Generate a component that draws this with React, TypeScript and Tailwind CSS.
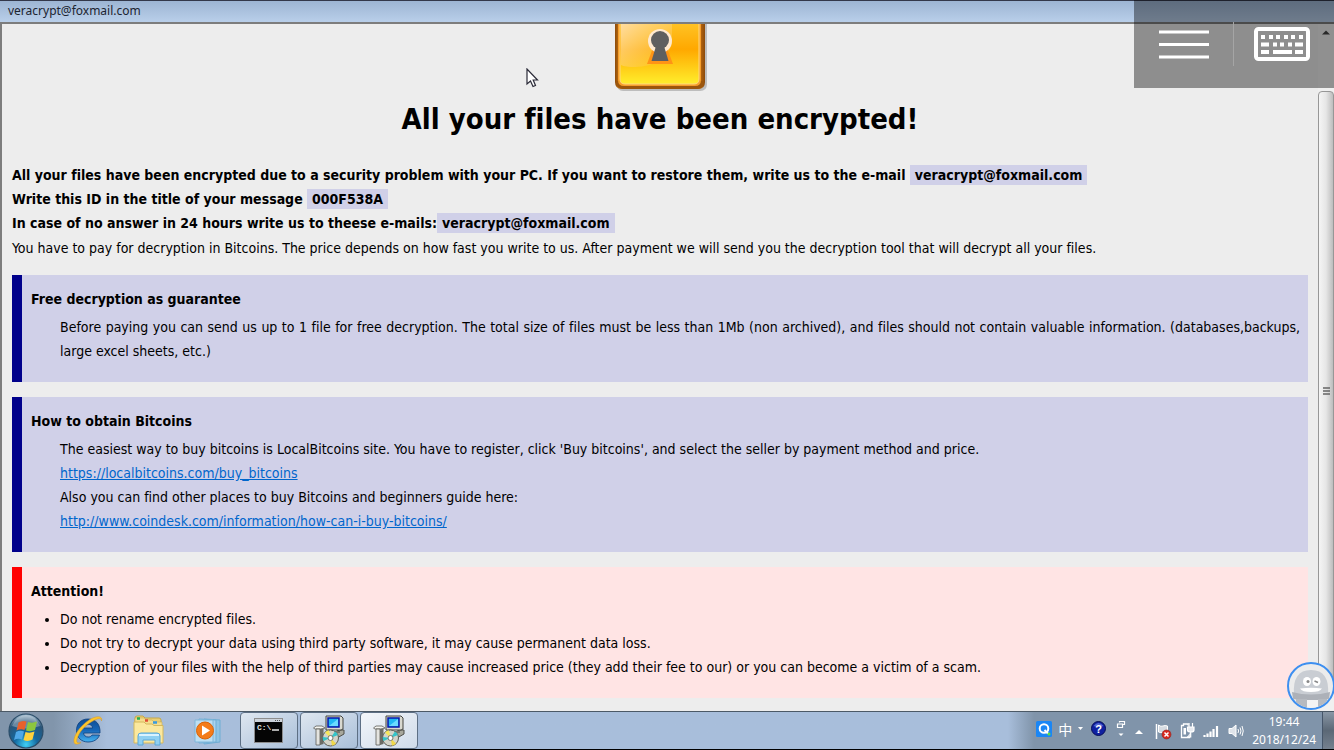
import React from "react";

const EMAIL = "veracrypt@foxmail.com";

const LockImage = () => (
    <svg width="94" height="67" viewBox="0 0 94 67" className="mx-auto block" aria-label="lock" role="img">
        <defs>
            <linearGradient id="lockBody" x1="0" y1="0" x2="0" y2="1">
                <stop offset="0" stopColor="#ffc224"/>
                <stop offset="0.42" stopColor="#ffa800"/>
                <stop offset="1" stopColor="#ffee2c"/>
            </linearGradient>
            <linearGradient id="lockShine" x1="0" y1="0" x2="1" y2="1">
                <stop offset="0" stopColor="#ffdca0"/>
                <stop offset="1" stopColor="#ffc63c" stopOpacity="0.2"/>
            </linearGradient>
            <linearGradient id="lockEdge" x1="0" y1="0" x2="1" y2="0">
                <stop offset="0" stopColor="#8c4a0a"/>
                <stop offset="0.05" stopColor="#c27312"/>
                <stop offset="0.95" stopColor="#b5660f"/>
                <stop offset="1" stopColor="#8c4a0a"/>
            </linearGradient>
        </defs>
        <path d="M4 0H94V60Q94 67 87 67H10Q4 67 4 60Z" fill="#bdbdbd"/>
        <path d="M2 0H92V58Q92 65 85 65H9Q2 65 2 58Z" fill="url(#lockEdge)"/>
        <path d="M3 57Q4 65 10 65H84Q91 65 91 57Z" fill="#9c560c"/>
        <path d="M5 0H88V56Q88 62 82 62H11Q5 62 5 56Z" fill="#f79e2a"/>
        <path d="M7 0H86V55Q86 60 81 60H12Q7 60 7 55Z" fill="url(#lockBody)"/>
        <path d="M8 0H59V20Q52 42 22 43Q12 43 8 41Z" fill="url(#lockShine)"/>
        <path d="M7 0V55Q7 60 12 60H81Q86 60 86 55V0" fill="none" stroke="#ffd880" strokeWidth="1"/>
        <path d="M40 24L34 40H60L54 24Z" fill="#ff9416"/>
        <circle cx="47" cy="17" r="12" fill="#ffe9cf"/>
        <circle cx="47" cy="16" r="9" fill="#5f5f5f"/>
        <path d="M43 22L38.500 37H55.500L51 22Z" fill="#5f5f5f"/>
    </svg>
);

const Mark = ({children}: { children: React.ReactNode }) => (
    <span className="bg-[#d0d0e8] px-[5px] py-[2px]">{children}</span>
);

const Panel = ({title, tone, children}: { title: string; tone: "info" | "danger"; children: React.ReactNode }) => (
    <section
        className={
            tone === "info"
                ? "mt-[15px] border-l-10 border-[#00008b] bg-[#d0d0e8] pt-3 pr-2 pb-[19px] pl-[9px]"
                : "mt-[15px] border-l-10 border-[#ff0000] bg-[#ffe4e4] pt-3 pr-2 pb-[19px] pl-[9px]"
        }
    >
        <h2 className="mb-1 font-bold">{title}</h2>
        <div className="pl-[29px]">{children}</div>
    </section>
);

const ScrollBar = () => (
    <div className="flex w-4 shrink-0 flex-col bg-[#f0f0f0]">
        <div className="flex h-[67px] justify-center pt-[6px]">
            <svg width="8" height="5" viewBox="0 0 8 5"><path d="M0 4.500L4 0.500L8 4.500Z" fill="#444"/></svg>
        </div>
        <div className="flex flex-1 items-center justify-center rounded-sm border border-[#979797] bg-linear-to-r from-[#f5f5f5] via-[#e6e6e6] to-[#bdbdbd]">
            <svg width="7" height="8" viewBox="0 0 7 8"><path d="M0 1H7M0 4H7M0 7H7" stroke="#666" strokeWidth="1.400"/></svg>
        </div>
        <div className="h-[21px]"/>
    </div>
);

const RemoteToolbar = () => (
    <div className="absolute top-0 right-0 z-10 flex h-[88px] items-center bg-black/40">
        <button aria-label="Menu" className="flex w-[99px] justify-center">
            <svg width="50" height="30" viewBox="0 0 50 30">
                <path d="M0 3H50M0 15.500H50M0 28H50" stroke="#fff" strokeWidth="3"/>
            </svg>
        </button>
        <div className="h-11 w-px bg-[#a5a5a5]"/>
        <button aria-label="Keyboard" className="flex w-[100px] justify-center pr-1">
            <svg width="56" height="34" viewBox="0 0 56 34">
                <rect x="2" y="2" width="52" height="30" rx="2.500" fill="none" stroke="#fff" strokeWidth="4"/>
                <path d="M7 10H11M15 10H19M22 10H26M30 10H34M37 10H41M45 10H49" stroke="#fff" strokeWidth="4"/>
                <path d="M7 17.500H15M19 17.500H23M26 17.500H30M34 17.500H38M41 17.500H49" stroke="#fff" strokeWidth="4"/>
                <path d="M7 25H15M19 25H38M41 25H49" stroke="#fff" strokeWidth="4"/>
            </svg>
        </button>
    </div>
);

const Assistant = () => (
    <button aria-label="Assistant" className="absolute right-0 bottom-[39px] z-10">
        <svg width="47" height="50" viewBox="0 0 47 50">
            <defs>
                <clipPath id="bubble"><circle cx="24" cy="25" r="22"/></clipPath>
            </defs>
            <circle cx="24" cy="25" r="23" fill="#ececec" stroke="#3d8ff0" strokeWidth="2"/>
            <g clipPath="url(#bubble)">
                <path d="M7 34Q5 9 24 9Q43 9 41 34Z" fill="#c9cdd3"/>
                <path d="M5 31Q24 36 43 31L42 38Q24 41 6 38Z" fill="#adb1b8"/>
                <path d="M9 38H20V50H9ZM31 38H40V50H31Z" fill="#b6bac0"/>
                <path d="M20 39H31V50H20Z" fill="#f4f4f4"/>
            </g>
            <ellipse cx="20" cy="20.500" rx="4" ry="4.500" fill="#fff"/>
            <ellipse cx="29.500" cy="20.500" rx="4" ry="4.500" fill="#fff"/>
            <circle cx="21" cy="20.500" r="1.500" fill="#888"/>
            <path d="M27.500 20L31 21.500" stroke="#888" strokeWidth="1.500"/>
            <path d="M13 27.500Q24 26 35 27.500Q33 31 24 31Q15 31 13 27.500Z" fill="#fff"/>
        </svg>
    </button>
);

const Cursor = () => (
    <svg className="absolute top-[68px] left-[526px]" width="13" height="20" viewBox="0 0 13 20">
        <path d="M1 1V16L4.500 13L7 18.500L9.500 17.500L7.200 12H11.500Z" fill="#fff" stroke="#2b2b38" strokeWidth="1.200"/>
    </svg>
);

const StartIcon = () => (
    <svg width="36" height="36" viewBox="0 0 36 36">
        <defs>
            <radialGradient id="orb" cx="0.5" cy="0.9" r="0.85">
                <stop offset="0" stopColor="#3fd0f5"/>
                <stop offset="0.4" stopColor="#14689f"/>
                <stop offset="0.8" stopColor="#2a5578"/>
                <stop offset="1" stopColor="#8fabc0"/>
            </radialGradient>
        </defs>
        <circle cx="18" cy="18" r="17" fill="url(#orb)" stroke="#2b4d69" strokeWidth="1.200"/>
        <path d="M4 13Q9 2 18 2Q27 2 32 13Q18 18 4 13Z" fill="#fff" opacity="0.3"/>
        <path d="M10.500 9.500Q14 7 18.500 8.500L16.500 17Q12.500 15.500 8.500 17.500Z" fill="#e8602c"/>
        <path d="M20 9Q24.500 10.500 29 8.500L27 17Q22.500 19 18 17.500Z" fill="#8cc63e"/>
        <path d="M8 19Q12 17 16 18.500L14 26.500Q10 25 6 27Z" fill="#4fa8e8"/>
        <path d="M17.500 19Q22 20.500 26.500 18.500L24.500 26.500Q20 29 15.500 27Z" fill="#ffd23c"/>
    </svg>
);

const ExplorerE = () => (
    <svg width="32" height="32" viewBox="0 0 32 32">
        <defs>
            <linearGradient id="ie" x1="0" y1="0" x2="0" y2="1">
                <stop offset="0" stopColor="#0d4c94"/>
                <stop offset="0.5" stopColor="#1767b8"/>
                <stop offset="1" stopColor="#46b4f0"/>
            </linearGradient>
        </defs>
        <path d="M16 4C8.500 4 4.500 9 4.500 15.500C4.500 22.500 9.500 27 16 27C21.500 27 26 24.500 27.500 20H20C19.300 21.300 18 22 16.200 22C13.500 22 11.800 20.500 11.600 18H28C28.500 9.500 24 4 16 4ZM11.700 13C12.200 10.500 13.800 9.300 16.200 9.300C18.700 9.300 20.300 10.700 20.600 13Z" fill="url(#ie)" stroke="#0c3f7d" strokeWidth="0.800"/>
        <path d="M29.500 6C31 1 25 0 17 5C8 11 1 21 2 27C2.500 30 6 29.500 9 27.500C5.500 28.500 4 27.500 5 24C7 17 13.500 10 20 6.500C25.500 3.200 29.500 2.500 29.500 6Z" fill="#fdc62b" stroke="#d7962a" strokeWidth="0.500"/>
    </svg>
);

const FolderIcon = () => (
    <svg width="34" height="32" viewBox="0 0 34 32">
        <path d="M3 3Q3 1 5 1H11L13 3H27Q29 3 29 5V24H3Z" fill="#e9cf76" stroke="#c6a748"/>
        <path d="M3 3H12L14 5H20L22 7H30V15H3Z" fill="#f5dd8c" stroke="#cfb056" strokeWidth="0.600"/>
        <path d="M5 3.500H8" stroke="#23b14d" strokeWidth="2.500"/>
        <path d="M13 5.500H16" stroke="#e04b32" strokeWidth="2.500"/>
        <path d="M21 7.500H25" stroke="#3a9be0" strokeWidth="2.500"/>
        <path d="M2 7H12L14 9H20L22 10.500H31V28H2Z" fill="#fbe89e" stroke="#d4b85d"/>
        <path d="M6 30V21Q6 18 9 18H25Q28 18 28 21V30H23V25H11V30Z" fill="#8fd0f2" stroke="#5aa7d8"/>
        <path d="M7 20H27" stroke="#d9f2ff" strokeWidth="2"/>
    </svg>
);

const PlayerIcon = () => (
    <svg width="30" height="28" viewBox="0 0 30 28">
        <path d="M10 2L26 3V25L10 27Z" fill="#8fc4e4" stroke="#6fadd4"/>
        <path d="M5 2L22 3V25L5 26Z" fill="#a9d4ee" stroke="#6fadd4"/>
        <path d="M1 3H19V25H1Z" fill="#bddff2" stroke="#7fb6da"/>
        <circle cx="11" cy="13.500" r="8.500" fill="#f47c1a" stroke="#d96308"/>
        <path d="M8 8.500V18.500L16 13.500Z" fill="#fff"/>
    </svg>
);

const ConsoleIcon = () => (
    <svg width="30" height="26" viewBox="0 0 30 26">
        <rect x="0.500" y="0.500" width="28" height="24" fill="#050505" stroke="#8d8d8d"/>
        <rect x="1" y="1" width="27" height="3" fill="#cdd3da"/>
        <path d="M21 2.500H27" stroke="#555" strokeDasharray="1 1"/>
        <text x="3" y="12" fontSize="8" fontWeight="bold" fill="#e4e4e4" fontFamily="Liberation Mono, monospace">C:\</text>
        <path d="M18 12H25" stroke="#e4e4e4" strokeWidth="1.500"/>
    </svg>
);

const InstallerIcon = () => (
    <svg width="32" height="32" viewBox="0 0 32 32">
        <path d="M26 15L31 15V19L24 23H18V20Z" fill="#a8a89c" stroke="#4e4e48"/>
        <path d="M13 1H28L30 3V14L28 15H13Z" fill="#d9d9d0" stroke="#44443f"/>
        <rect x="15" y="3" width="11" height="9" fill="#20b8f4" stroke="#0616a8" strokeWidth="1.500"/>
        <path d="M16 11L25 4V11Z" fill="#6adcff"/>
        <path d="M14 16H27V18H14Z" fill="#77776e"/>
        <path d="M0.500 13L3 11H9L12 13L10 14H2Z" fill="#f4f4f0" stroke="#5a5a55" strokeWidth="0.800"/>
        <path d="M3 14H7V30H3Z" fill="#e4e4e0" stroke="#5a5a55" strokeWidth="0.800"/>
        <path d="M7 14L10.500 13V29L7 30Z" fill="#6c6c66"/>
        <circle cx="17.500" cy="23" r="8" fill="#d3d3c9" stroke="#5d5d55"/>
        <path d="M17.500 23L12 17.500A8 8 0 0 1 16 15.200Z" fill="#f5e65a"/>
        <path d="M17.500 23L22 16.500A8 8 0 0 1 25 20Z" fill="#35c4c9"/>
        <path d="M17.500 23L10.500 26A8 8 0 0 1 9.700 22Z" fill="#35c4c9"/>
        <path d="M17.500 23L19 30.800A8 8 0 0 0 23 28.500Z" fill="#f0d84a"/>
        <circle cx="17.500" cy="23" r="2.500" fill="#fff" stroke="#77776e"/>
    </svg>
);

const TaskButton = ({label, active, children}: { label: string; active?: boolean; children: React.ReactNode }) => (
    <button
        aria-label={label}
        className={
            active
                ? "flex h-full w-[58px] items-center justify-center rounded-sm border border-[#5d6f84] bg-linear-to-br from-[#f3f6fa] to-[#cfdbe9]"
                : "flex h-full w-[58px] items-center justify-center rounded-sm border border-[#5d6f84] bg-linear-to-br from-[#dfe7f0] to-[#a9bfd9]"
        }
    >
        {children}
    </button>
);

const Tray = () => (
    <div className="flex h-full items-center bg-linear-to-r from-[#a8bedb] to-[#8094aa] to-8% pl-7 text-white">
        <svg width="16" height="16" viewBox="0 0 16 16" className="mr-[6px] mb-1">
            <rect width="16" height="16" rx="1.500" fill="#1a86f5"/>
            <circle cx="8" cy="7.500" r="4.300" fill="none" stroke="#fff" strokeWidth="2"/>
            <path d="M8.500 9L12 12.500" stroke="#fff" strokeWidth="2"/>
            <circle cx="13" cy="13" r="1.500" fill="#5ee03c"/>
        </svg>
        <span className="mr-1 mb-1 w-4 font-['Noto_Sans_CJK_SC',sans-serif] text-sm leading-4">中</span>
        <svg width="5" height="3" viewBox="0 0 5 3" className="mr-2 mb-1"><path d="M0 0H5L2.500 3Z" fill="#fff"/></svg>
        <svg width="15" height="15" viewBox="0 0 15 15" className="mr-[10px] mb-1">
            <circle cx="7.500" cy="7.500" r="7" fill="#1020a0" stroke="#070d58"/>
            <path d="M2.500 5Q7.500 -1 12.500 5Q7.500 7 2.500 5Z" fill="#6f83e8" opacity="0.7"/>
            <text x="7.500" y="11.500" textAnchor="middle" fontSize="11" fontWeight="bold" fill="#fff" fontFamily="Liberation Sans, sans-serif">?</text>
        </svg>
        <svg width="10" height="18" viewBox="0 0 10 18" className="mr-[9px] mb-1">
            <path d="M3.500 2.500V1.500H8.500V4.500H7M1.500 4H6.500V7.500H1.500Z" fill="none" stroke="#fff" strokeWidth="1.200"/>
            <path d="M2.500 13.500H7.500L5 16Z" fill="#fff"/>
        </svg>
        <svg width="8" height="10" viewBox="0 0 8 10" className="mr-3"><path d="M0 8L4 4L8 8Z" fill="#fff"/></svg>
        <svg width="17" height="18" viewBox="0 0 17 18" className="mr-2">
            <path d="M1.500 2V17" stroke="#fff" strokeWidth="1.500"/>
            <path d="M3.500 3Q6 5 8 4Q10 3 12.500 4V10Q10 9 8 10.500Q6 11 3.500 10Z" fill="#d5dbe2" stroke="#fff"/>
            <circle cx="11.500" cy="12.500" r="4.500" fill="#d8281f" stroke="#8b2620" strokeWidth="0.600"/>
            <path d="M9.500 10.500L13.500 14.500M13.500 10.500L9.500 14.500" stroke="#fff" strokeWidth="1.500"/>
        </svg>
        <svg width="15" height="17" viewBox="0 0 15 17" className="mr-2">
            <path d="M8 3.500V2H3.500V3.500H1.500V15.500H9.500V14" fill="none" stroke="#fff" strokeWidth="1.300"/>
            <path d="M3.500 6H6V12.500H3.500Z" fill="#fff"/>
            <path d="M9 1V5M12.500 1V5M7.500 5H14V8Q14 10 11 10Q7.500 10 7.500 8ZM10.700 10V15H7" fill="#e7ebf0" stroke="#fff" strokeWidth="1.200"/>
        </svg>
        <svg width="17" height="14" viewBox="0 0 17 14" className="mr-2">
            <path d="M1.500 13V11M4.500 13V9.500M7.500 13V7.500M10.500 13V5M14 13V2" stroke="#fff" strokeWidth="2.200"/>
        </svg>
        <svg width="16" height="16" viewBox="0 0 16 16" className="mr-2">
            <path d="M1 5.500H4L8 2V14L4 10.500H1Z" fill="#dfe4ea" stroke="#fff"/>
            <path d="M10 6Q11.200 8 10 10M12 4.500Q14 8 12 11.500M14 3Q16.500 8 14 13" fill="none" stroke="#fff"/>
        </svg>
        <div className="mr-[6px] text-center font-['Noto_Sans',sans-serif] text-xs leading-[18px]">
            <div>19:44</div>
            <div>2018/12/24</div>
        </div>
        <button aria-label="Show desktop" className="h-full w-3 border-l border-[#46566a] bg-linear-to-b from-[#8997a6] via-[#5b6876] to-[#75818f]"/>
    </div>
);

const TaskBar = () => (
    <div className="flex h-[39px] shrink-0 items-center justify-between border-t border-b border-t-[#4b5966] border-b-black bg-linear-to-r from-[#8195ab] from-4% via-[#a8bedb] via-8% to-[#a8bedb]">
        <div className="flex h-full items-center">
            <button aria-label="Start" className="ml-2 w-[60px]"><StartIcon/></button>
            <button aria-label="Internet Explorer" className="w-16 pl-1"><ExplorerE/></button>
            <button aria-label="Explorer" className="w-[60px]"><FolderIcon/></button>
            <button aria-label="Media Player" className="w-12 pl-[2px]"><PlayerIcon/></button>
            <div className="flex h-full gap-[2px]">
                <TaskButton label="Console"><ConsoleIcon/></TaskButton>
                <TaskButton label="Installer"><InstallerIcon/></TaskButton>
                <TaskButton label="Installer" active><InstallerIcon/></TaskButton>
            </div>
        </div>
        <Tray/>
    </div>
);

export default function App() {
    return (
        <div className="relative flex h-screen flex-col overflow-hidden bg-[#ededed] font-['Tahoma','DejaVu_Sans_Condensed','DejaVu_Sans',sans-serif] text-sm leading-6 text-black [font-variant-ligatures:none]">
            <header className="flex h-[22px] shrink-0 items-center border-t border-[#33384a] bg-linear-to-b from-[#9db5d3] to-[#b9cfea] pb-[2px] pl-2 font-['Noto_Sans',sans-serif] text-xs text-[#1c2430]">
                {EMAIL}
            </header>

            <div className="flex min-h-0 flex-1 border-t-2 border-l-2 border-[#7d7d7d]">
                <main className="min-w-0 flex-1 overflow-hidden px-[10px]">
                    <LockImage/>
                    <h1 className="mt-2 text-center text-[29px] leading-10 font-bold">
                        All your files have been encrypted!
                    </h1>

                    <div className="mt-6 font-bold">
                        <p>
                            All your files have been encrypted due to a security problem with your PC. If you want to
                            restore them, write us to the e-mail <Mark>{EMAIL}</Mark>
                        </p>
                        <p>Write this ID in the title of your message <Mark>000F538A</Mark></p>
                        <p>In case of no answer in 24 hours write us to theese e-mails:<Mark>{EMAIL}</Mark></p>
                    </div>
                    <p className="mt-px">
                        You have to pay for decryption in Bitcoins. The price depends on how fast you write to us.
                        After payment we will send you the decryption tool that will decrypt all your files.
                    </p>

                    <Panel title="Free decryption as guarantee" tone="info">
                        <p className="text-justify">
                            Before paying you can send us up to 1 file for free decryption. The total size of files
                            must be less than 1Mb (non archived), and files should not contain valuable information.
                            (databases,backups, large excel sheets, etc.)
                        </p>
                    </Panel>

                    <Panel title="How to obtain Bitcoins" tone="info">
                        <p>
                            The easiest way to buy bitcoins is LocalBitcoins site. You have to register, click
                            &apos;Buy bitcoins&apos;, and select the seller by payment method and price.
                        </p>
                        <p>
                            <a href="#localbitcoins" className="text-[#0066cc] underline">
                                https://localbitcoins.com/buy_bitcoins
                            </a>
                        </p>
                        <p>Also you can find other places to buy Bitcoins and beginners guide here:</p>
                        <p>
                            <a href="#coindesk" className="text-[#0066cc] underline">
                                http://www.coindesk.com/information/how-can-i-buy-bitcoins/
                            </a>
                        </p>
                    </Panel>

                    <Panel title="Attention!" tone="danger">
                        <ul className="list-disc">
                            <li>Do not rename encrypted files.</li>
                            <li>Do not try to decrypt your data using third party software, it may cause permanent data loss.</li>
                            <li>
                                Decryption of your files with the help of third parties may cause increased price (they
                                add their fee to our) or you can become a victim of a scam.
                            </li>
                        </ul>
                    </Panel>
                </main>
                <ScrollBar/>
            </div>

            <TaskBar/>
            <Cursor/>
            <RemoteToolbar/>
            <Assistant/>
        </div>
    );
}
